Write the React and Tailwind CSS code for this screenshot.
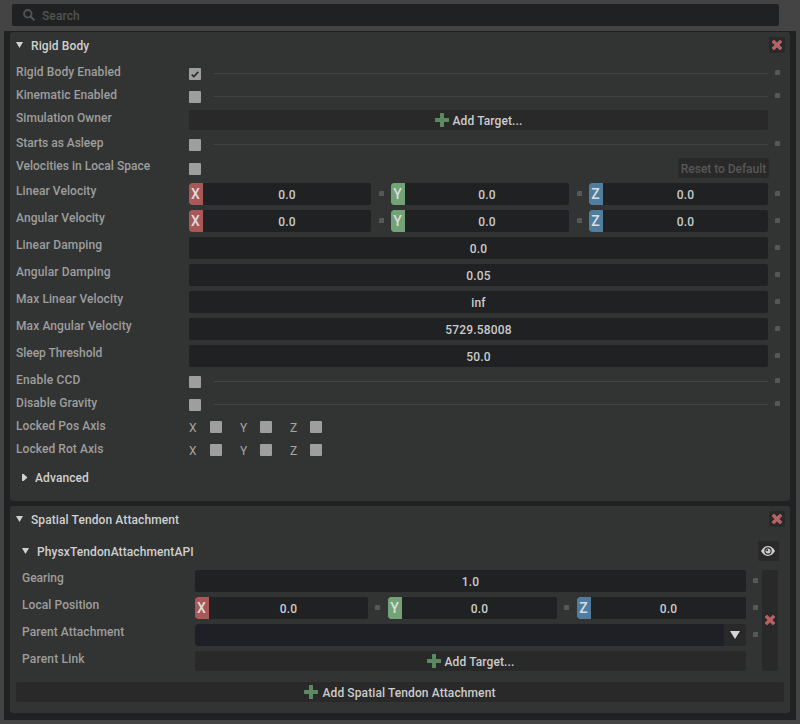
import React from "react";

function Plus() {
  return (
    <svg width="14" height="14" viewBox="0 0 14 14" className="shrink-0">
      <path d="M5.5 0h3a.5.5 0 0 1 .5.5V5h4.5a.5.5 0 0 1 .5.5v3a.5.5 0 0 1-.5.5H9v4.5a.5.5 0 0 1-.5.5h-3a.5.5 0 0 1-.5-.5V9H.5a.5.5 0 0 1-.5-.5v-3A.5.5 0 0 1 .5 5H5V.5a.5.5 0 0 1 .5-.5z" fill="#5c8961" />
    </svg>
  );
}

function Cross({ className = "" }) {
  return (
    <svg width="10" height="10" viewBox="0 0 10 10" className={`shrink-0 ${className}`}>
      <path d="M2 2L8 8M8 2L2 8" fill="none" stroke="#b56264" strokeWidth="3.4" strokeLinecap="square" />
    </svg>
  );
}

function Eye() {
  return (
    <svg width="14" height="10" viewBox="0 0 14 10">
      <path d="M0 5Q2.8 0.1 7 0.1T14 5Q11.2 9.9 7 9.9T0 5z" fill="#d0d0d0" />
      <circle cx="7" cy="5" r="3.7" fill="#2b2b2b" />
      <circle cx="7" cy="5" r="2.5" fill="#d0d0d0" />
      <circle cx="6.2" cy="4.3" r="1" fill="#2b2b2b" />
    </svg>
  );
}

function Down({ className = "" }) {
  return (
    <svg width="7" height="6" viewBox="0 0 7 6" className={`shrink-0 ${className}`}>
      <path d="M0 0h7L3.5 6z" fill="#d0d0d0" />
    </svg>
  );
}

function Dot({ className = "mt-2" }) {
  return (
    <svg width="5" height="5" viewBox="0 0 5 5" className={`shrink-0 ${className}`}>
      <path d="M1 0h4v5H0V1z" fill="#575757" />
    </svg>
  );
}

function Box({ checked, className = "mt-1" }) {
  return (
    <span className={`flex size-3 shrink-0 items-center justify-center rounded-[1px] bg-[#9e9e9e] ${className}`}>
      {checked && (
        <svg width="8" height="7" viewBox="0 0 8 7">
          <path d="M0.7 3.6L2.8 5.6L7.3 0.9" fill="none" stroke="#2a2a2a" strokeWidth="1.7" />
        </svg>
      )}
    </span>
  );
}

function Label({ children, tracking = "tracking-[0.07px]" }) {
  return <span className={`w-[173px] shrink-0 whitespace-nowrap leading-4 text-[#9e9e9e] ${tracking}`}>{children}</span>;
}

function CheckRow({ label, checked, tracking, line = "bg-[#3f4544]" }) {
  return (
    <div className="flex h-[18px] items-start">
      <Label tracking={tracking}>{label}</Label>
      <Box checked={checked} />
      <span className={`mt-[9px] ml-[13px] h-px flex-1 ${line}`} />
      <Dot className="mt-1.5 ml-[7px] mr-2.5" />
    </div>
  );
}

const tags = { X: "bg-[#aa5757]", Y: "bg-[#71a376]", Z: "bg-[#4f7da0]" };

function Axis({ axis, className }) {
  return (
    <div className={`flex h-[22px] overflow-hidden rounded-[2px] bg-[#1f2123] ${className}`}>
      <span className={`flex w-3.5 items-center justify-center rounded-l-[3px] pr-px text-sm font-medium tracking-normal text-[#dcdcdc] ${tags[axis]}`}>{axis}</span>
      <span className="flex-1 pt-[3px] text-center leading-[18px] tracking-[0.2px]">0.0</span>
    </div>
  );
}

function Field({ children }) {
  return <div className="h-[22px] flex-1 rounded-[2px] bg-[#1f2123] pt-[3px] text-center leading-[18px] tracking-[0.2px]">{children}</div>;
}

function FieldRow({ label, value, tracking }) {
  return (
    <div className="flex h-[22px] items-start">
      <Label tracking={tracking}>{label}</Label>
      <Field>{value}</Field>
      <Dot className="mt-2 ml-[7px] mr-2.5" />
    </div>
  );
}

function VectorRow({ label }) {
  return (
    <div className="flex h-[22px] items-start">
      <Label>{label}</Label>
      <Axis axis="X" className="w-[182px]" />
      <Dot className="mt-2 mr-[7px] ml-2" />
      <Axis axis="Y" className="w-[178px]" />
      <Dot className="mt-2 mr-[7px] ml-2" />
      <Axis axis="Z" className="flex-1" />
      <Dot className="mt-2 ml-[7px] mr-2.5" />
    </div>
  );
}

function AddButton({ children, className }) {
  return (
    <div className={`flex h-5 items-center justify-center gap-1 rounded-[2px] bg-[#292929] text-[#cccccc] ${className}`}>
      <Plus />
      <span className="pt-0.5 leading-[18px]">{children}</span>
    </div>
  );
}

function LockRow({ label }) {
  return (
    <div className="flex h-[18px] items-start">
      <Label>{label}</Label>
      <span className="w-[21px] pt-0.5 leading-4 font-normal text-[#a6a6a6]">X</span>
      <Box className="mt-[3px]" />
      <span className="ml-[18px] w-5 pt-0.5 leading-4 font-normal text-[#a6a6a6]">Y</span>
      <Box className="mt-[3px]" />
      <span className="ml-[18px] w-5 pt-0.5 leading-4 font-normal text-[#a6a6a6]">Z</span>
      <Box className="mt-[3px]" />
    </div>
  );
}

function PanelHeader({ title }) {
  return (
    <div className="flex h-[27px] items-center pl-1.5 pr-[5px]">
      <Down className="mb-px" />
      <span className="ml-2 flex-1 pt-px text-[#d0d0d0]">{title}</span>
      <span className="mb-px flex size-4 items-center justify-center rounded-[2px] bg-[#292929]">
        <Cross />
      </span>
    </div>
  );
}

export default function App() {
  return (
    <div className="flex h-[724px] w-[800px] flex-col bg-[#444444] px-1 pt-1 font-['Roboto',sans-serif] text-[12px] font-medium tracking-[0.1px] text-[#cccccc]">
      <div className="mx-2 mr-[17px] flex h-[22px] shrink-0 items-center rounded-[2px] bg-[#1f2123] pl-[11px]">
        <svg width="12" height="12" viewBox="0 0 12 12">
          <circle cx="4.8" cy="4.8" r="3.8" fill="none" stroke="#545454" strokeWidth="1.8" />
          <path d="M7.8 7.8L10.8 10.8" stroke="#545454" strokeWidth="2" strokeLinecap="round" />
        </svg>
        <span className="ml-[7px] pt-0.5 text-[#545454]">Search</span>
      </div>
      <div className="mt-[5px] flex h-[689px] shrink-0 flex-col gap-[5px] bg-[#1f2123] px-1.5 pt-px">
        <section className="h-[469px] rounded-[3px] bg-[#323433]">
          <PanelHeader title="Rigid Body" />
          <div className="mt-[5px] flex flex-col gap-[5px] pl-1.5">
            <CheckRow label="Rigid Body Enabled" checked tracking="tracking-[0.1px]" />
            <CheckRow label="Kinematic Enabled" />
            <div className="flex h-5 items-start">
              <Label tracking="tracking-[0.04px]">Simulation Owner</Label>
              <AddButton className="mr-[22px] flex-1">Add Target...</AddButton>
            </div>
            <CheckRow label="Starts as Asleep" tracking="tracking-[-0.03px]" />
            <div className="flex h-5 items-start">
              <Label tracking="tracking-[0.02px]">Velocities in Local Space</Label>
              <Box className="mt-[5px]" />
              <span className="mr-[21px] ml-auto h-5 w-[91px] rounded-[2px] bg-[#292929] pt-0.5 text-center leading-[18px] tracking-[-0.04px] whitespace-nowrap text-[#575757]">Reset to Default</span>
            </div>
            <VectorRow label="Linear Velocity" />
            <VectorRow label="Angular Velocity" />
            <FieldRow label="Linear Damping" value="0.0" tracking="tracking-[0.13px]" />
            <FieldRow label="Angular Damping" value="0.05" tracking="tracking-[0.13px]" />
            <FieldRow label="Max Linear Velocity" value="inf" tracking="tracking-[0.1px]" />
            <FieldRow label="Max Angular Velocity" value="5729.58008" tracking="tracking-[0.1px]" />
            <FieldRow label="Sleep Threshold" value="50.0" tracking="tracking-[-0.03px]" />
            <CheckRow label="Enable CCD" line="bg-[#444444]" tracking="tracking-[0.18px]" />
            <CheckRow label="Disable Gravity" line="bg-[#444444]" />
            <LockRow label="Locked Pos Axis" />
            <LockRow label="Locked Rot Axis" />
          </div>
          <div className="mt-[11px] flex h-4 items-center pl-3 text-[#d0d0d0]">
            <svg width="5" height="7" viewBox="0 0 5 7" className="mb-px">
              <path d="M0 0H1.5L5 3V4L1.5 7H0z" fill="#d0d0d0" />
            </svg>
            <span className="ml-2">Advanced</span>
          </div>
        </section>
        <section className="h-[207px] rounded-[3px] bg-[#323433]">
          <PanelHeader title="Spatial Tendon Attachment" />
          <div className="mt-2 flex h-5 items-center pr-[11px] pl-3">
            <Down />
            <span className="ml-2 flex-1 pt-px text-[#d0d0d0]">PhysxTendonAttachmentAPI</span>
            <span className="flex h-5 w-[21px] items-center rounded-[2px] bg-[#292929] pl-[3px]">
              <Eye />
            </span>
          </div>
          <div className="mt-[9px] flex pr-3 pl-3">
            <div className="flex flex-1 flex-col gap-[5px]">
              <div className="flex h-[22px] items-start">
                <Label tracking="tracking-normal">Gearing</Label>
                <Field>1.0</Field>
                <Dot className="mt-2 mr-1 ml-[7px]" />
              </div>
              <div className="flex h-[22px] items-start">
                <Label>Local Position</Label>
                <Axis axis="X" className="w-[173px]" />
                <Dot className="mt-2 mr-2 ml-[7px]" />
                <Axis axis="Y" className="w-[169px]" />
                <Dot className="mt-2 mr-2 ml-[7px]" />
                <Axis axis="Z" className="flex-1" />
                <Dot className="mt-2 mr-1 ml-[7px]" />
              </div>
              <div className="flex h-[22px] items-start">
                <Label>Parent Attachment</Label>
                <div className="flex h-[22px] flex-1 justify-end overflow-hidden rounded-[4px] bg-[#1f2025]">
                  <span className="flex w-[22px] items-center justify-center bg-[#292929]">
                    <svg width="10" height="8" viewBox="0 0 10 8">
                      <path d="M0 0h10L5 8z" fill="#d6d6d6" />
                    </svg>
                  </span>
                </div>
                <Dot className="mt-2 mr-1 ml-[7px]" />
              </div>
              <div className="flex h-5 items-start">
                <Label tracking="tracking-[0.18px]">Parent Link</Label>
                <AddButton className="mr-4 flex-1">Add Target...</AddButton>
              </div>
            </div>
            <div className="flex w-4 items-center justify-center rounded-[2px] bg-[#292929]">
              <Cross className="mb-px" />
            </div>
          </div>
          <AddButton className="mx-1.5 mt-[11px]">Add Spatial Tendon Attachment</AddButton>
        </section>
      </div>
    </div>
  );
}
